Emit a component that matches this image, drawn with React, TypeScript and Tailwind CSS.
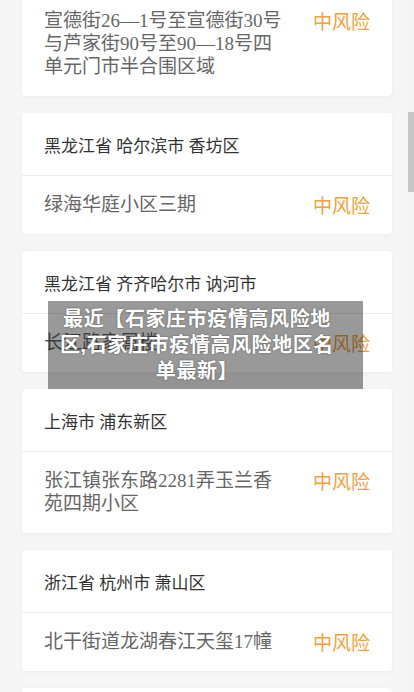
import React from "react";

const rowFont = {
  fontFamily: '"Liberation Serif", "Noto Sans CJK SC", serif',
};

const areas = [
  {
    region: "河北省 张家口市 宣化区",
    place: "宣德街26—1号至宣德街30号与芦家街90号至90—18号四单元门市半合围区域",
  },
  { region: "黑龙江省 哈尔滨市 香坊区", place: "绿海华庭小区三期" },
  { region: "黑龙江省 齐齐哈尔市 讷河市", place: "长江路家属楼" },
  { region: "上海市 浦东新区", place: "张江镇张东路2281弄玉兰香苑四期小区" },
  { region: "浙江省 杭州市 萧山区", place: "北干街道龙湖春江天玺17幢" },
  { region: "江苏省 南京市 江宁区", place: "秣陵街道翠屏城" },
];

const AreaCard = ({ region, place }: { region: string; place: string }) => (
  <div className="rounded-[4px] bg-white shadow-[0_1px_4px_rgba(0,0,0,0.04)]">
    <div
      className="flex h-[63px] items-center border-b border-[#ececec] px-[22px] pt-[5px] text-[17px] leading-[23px] text-[#333]"
      style={rowFont}
    >
      {region}
    </div>
    <div className="flex items-start justify-between px-[22px] pt-[17px] pb-[18px]">
      <div
        className="max-w-[244px] text-[19px] leading-[23px] text-[#666]"
        style={rowFont}
      >
        {place}
      </div>
      <span className="shrink-0 text-[19px] leading-[23px] text-[#f4a03a] [font-family:'Noto_Sans_CJK_SC',sans-serif]">
        中风险
      </span>
    </div>
  </div>
);

export default function App() {
  return (
    <div className="relative h-[692px] w-full overflow-hidden bg-[#f5f5f5]">
      <div className="-mt-[71px] flex flex-col gap-[17px] px-[22px]">
        {areas.map((a) => (
          <AreaCard key={a.region} region={a.region} place={a.place} />
        ))}
      </div>

      {/* title overlay */}
      <div className="absolute left-[48px] top-[301px] w-[315px] bg-[rgba(0,0,0,0.4)] py-[5px] pl-[9px] pr-[26px]">
        <p className="text-center text-[20px] font-bold leading-[26px] tracking-[0.6px] text-white [font-family:'Liberation_Sans','Noto_Sans_CJK_SC',sans-serif] [text-shadow:0_0_2px_rgba(0,0,0,0.45)]">
          最近【石家庄市疫情高风险地区,石家庄市疫情高风险地区名单最新】
        </p>
      </div>

      {/* scrollbar */}
      <div className="absolute right-0 top-0 h-full w-[6px] bg-[#f3f3f3]">
        <div className="mt-[112px] h-[80px] w-full bg-[#c6c6c6]" />
      </div>
    </div>
  );
}
